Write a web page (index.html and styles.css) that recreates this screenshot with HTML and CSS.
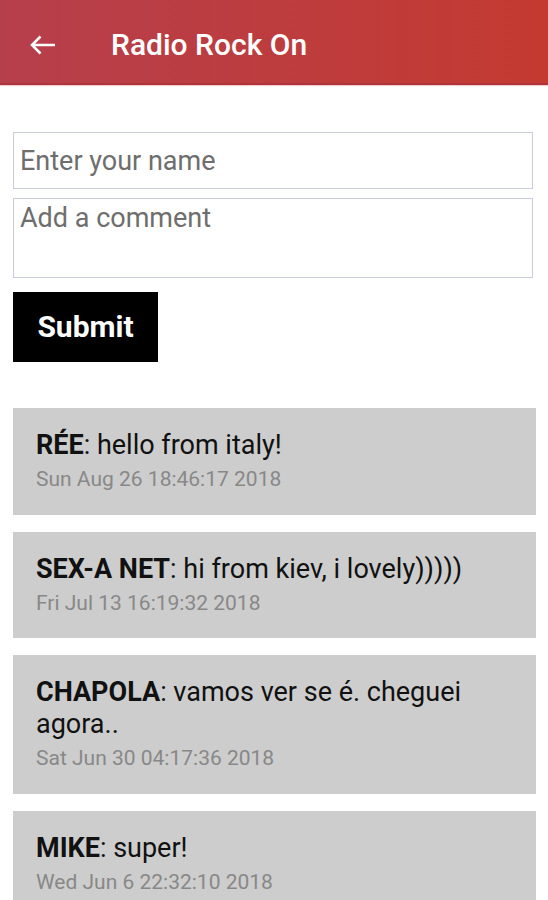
FILE: index.html
```html
<!DOCTYPE html>
<html lang="en">
<head>
<meta charset="utf-8">
<title>Radio Rock On</title>
<link rel="stylesheet" href="styles.css">
</head>
<body>
<header class="appbar">
  <button class="back" aria-label="Back">
    <svg width="26" height="20" viewBox="0 0 26 20"><path d="M2 10H25M10.5 1.5L2 10l8.5 8.5" fill="none" stroke="#fff" stroke-width="2.5" stroke-linecap="butt" stroke-linejoin="miter"/></svg>
  </button>
  <h1 class="title">Radio Rock On</h1>
</header>
<main class="content">
  <form class="form">
    <input class="field name" type="text" placeholder="Enter your name">
    <textarea class="field comment" placeholder="Add a comment"></textarea>
    <button class="submit" type="button">Submit</button>
  </form>
  <ul class="comments">
    <li class="card">
      <p class="msg"><b>RÉE</b>: hello from italy!</p>
      <p class="date">Sun Aug 26 18:46:17 2018</p>
    </li>
    <li class="card">
      <p class="msg"><b>SEX-A NET</b>: hi from kiev, i lovely)))))</p>
      <p class="date">Fri Jul 13 16:19:32 2018</p>
    </li>
    <li class="card">
      <p class="msg"><b>CHAPOLA</b>: vamos ver se é. cheguei agora..</p>
      <p class="date">Sat Jun 30 04:17:36 2018</p>
    </li>
    <li class="card">
      <p class="msg"><b>MIKE</b>: super!</p>
      <p class="date">Wed Jun 6 22:32:10 2018</p>
    </li>
  </ul>
</main>
</body>
</html>
```
FILE: styles.css
```css
* { box-sizing: border-box; }
html, body { margin: 0; padding: 0; background: #fff; }
body { font-family: Roboto, "Noto Sans", sans-serif; color: #111; }

.appbar {
  height: 85px;
  display: flex;
  align-items: center;
  padding: 6px 0 0 30px;
  background: linear-gradient(to right, #b63f4c, #c43a31);
  border-bottom: 2px solid #b0333a;
  box-shadow: 0 1px 1px rgba(190, 60, 70, 0.25);
}
.back {
  background: none; border: 0; padding: 0; margin: 0;
  width: 26px; height: 20px;
  display: flex; align-items: center;
}
.title {
  margin: 0 0 0 55px;
  font-size: 30px;
  font-weight: 500;
  color: #fff;
  letter-spacing: 0;
}

.content { padding: 47px 12px 0 13px; }

.form { display: flex; flex-direction: column; align-items: flex-start; }
.field {
  width: 520px;
  border: 1.5px solid #c9ccdc;
  font-family: Roboto, sans-serif;
  font-size: 27px;
  color: #333;
  background: #fff;
  padding: 0 6px;
  margin: 0;
  outline: none;
}
.field::placeholder { color: #6e6e6e; }
.name { height: 57px; }
.comment { height: 80px; margin-top: 9px; padding-top: 3px; resize: none; line-height: 1.2; }
.submit {
  margin-top: 14px;
  width: 145px; height: 70px;
  background: #000; color: #fff; border: 0;
  font-family: Roboto, sans-serif;
  font-size: 30px; font-weight: 700;
  padding: 0 0 2px;
}

.comments { list-style: none; margin: 46px 0 0; padding: 0; display: flex; flex-direction: column; gap: 17px; }
.card { background: #cdcdcd; padding: 21px 23px 21.5px; }
.msg { margin: 0; font-size: 27px; line-height: 32px; color: #111; }
.msg b { font-weight: 700; }
.date { margin: 4px 0 0; font-size: 21px; line-height: 28px; color: #888; }
```
